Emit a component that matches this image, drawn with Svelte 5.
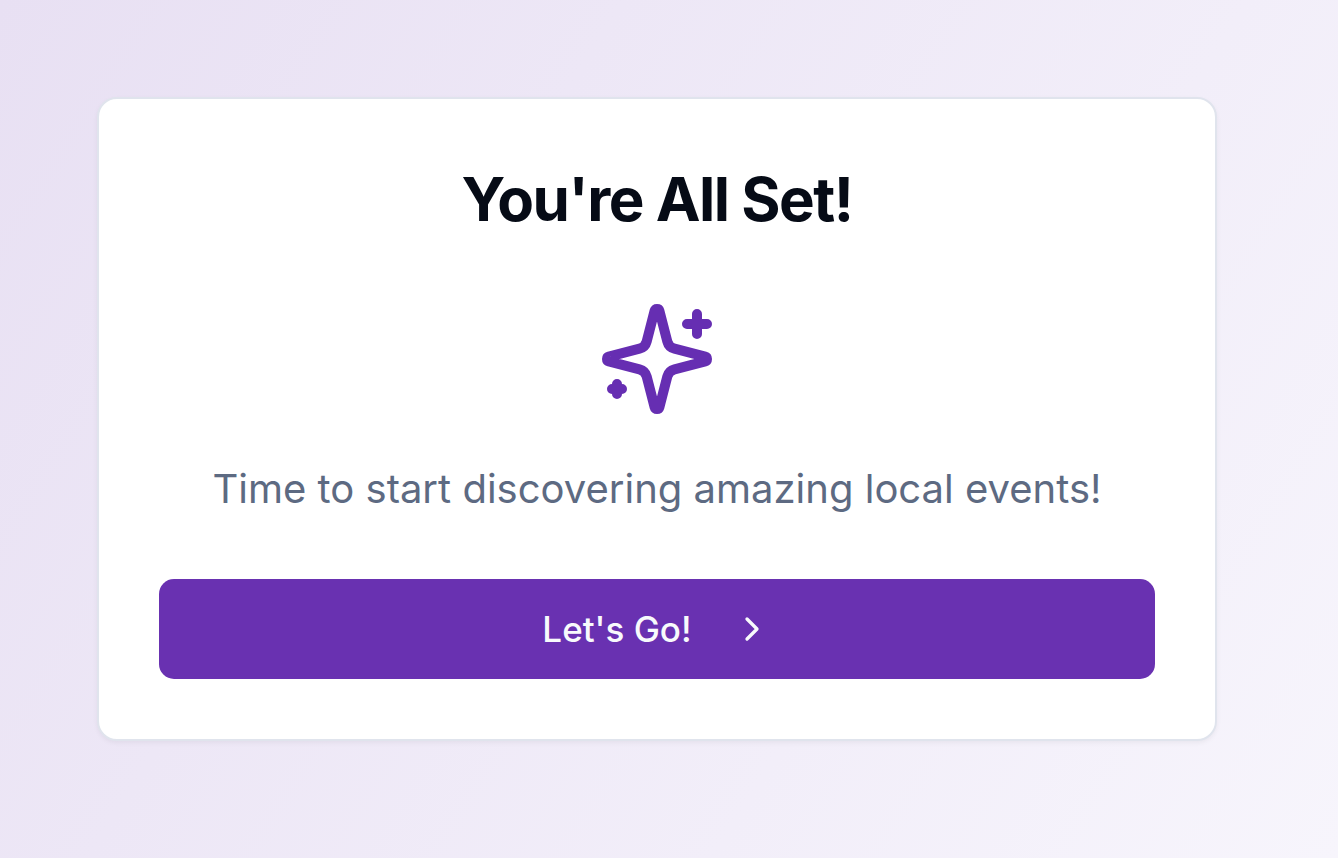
<script>
  let started = $state(false);
</script>

<main>
  <section class="card">
    <h1>You're All Set!</h1>
    <svg class="sparkles" viewBox="0 0 24 24" aria-hidden="true">
      <path d="M9.937 15.5A2 2 0 0 0 8.5 14.063l-6.135-1.582a.5.5 0 0 1 0-.962L8.5 9.936A2 2 0 0 0 9.937 8.5l1.582-6.135a.5.5 0 0 1 .963 0L14.063 8.5A2 2 0 0 0 15.5 9.937l6.135 1.581a.5.5 0 0 1 0 .964L15.5 14.063a2 2 0 0 0-1.437 1.437l-1.582 6.135a.5.5 0 0 1-.963 0z" />
      <path d="M20 3v4M22 5h-4M4 17v2M5 18H3" />
    </svg>
    <p>Time to start discovering amazing local events!</p>
    <button type="button" onclick={() => (started = true)}>
      Let's Go!
      <svg class="chevron" viewBox="0 0 24 24" aria-hidden="true">
        <path d="m9 18 6-6-6-6" />
      </svg>
    </button>
  </section>
</main>

<style>
  :global(body) {
    margin: 0;
  }

  main {
    box-sizing: border-box;
    min-height: 100vh;
    padding: 97px 121px 116px 97px;
    background: linear-gradient(122deg, #e8e0f3 0%, #f7f5fc 100%);
    font-family: Inter, sans-serif;
  }

  .card {
    display: flex;
    flex-direction: column;
    align-items: center;
    box-sizing: border-box;
    padding: 60px;
    border: 2px solid #e0e4ed;
    border-radius: 20px;
    background: #fff;
    box-shadow: 0 2px 5px rgb(0 0 0 / 5%);
  }

  h1 {
    margin: 0;
    color: #060b16;
    font-size: 60px;
    font-weight: 700;
    line-height: 80px;
    letter-spacing: -0.025em;
  }

  svg {
    fill: none;
    stroke: currentColor;
    stroke-width: 2;
    stroke-linecap: round;
    stroke-linejoin: round;
  }

  .sparkles {
    width: 120px;
    height: 120px;
    margin: 60px 0 40px;
    color: #662eb2;
  }

  p {
    margin: 0 0 60px;
    color: #5d6a82;
    font-size: 40px;
    line-height: 60px;
    text-align: center;
  }

  button {
    display: flex;
    align-items: center;
    justify-content: center;
    gap: 40px;
    width: 100%;
    height: 100px;
    padding: 0 40px;
    border: 0;
    border-radius: 15px;
    background: #6931b1;
    color: #f8fafc;
    font: 500 35px/50px Inter, sans-serif;
    cursor: pointer;
  }

  .chevron {
    width: 40px;
    height: 40px;
  }
</style>
